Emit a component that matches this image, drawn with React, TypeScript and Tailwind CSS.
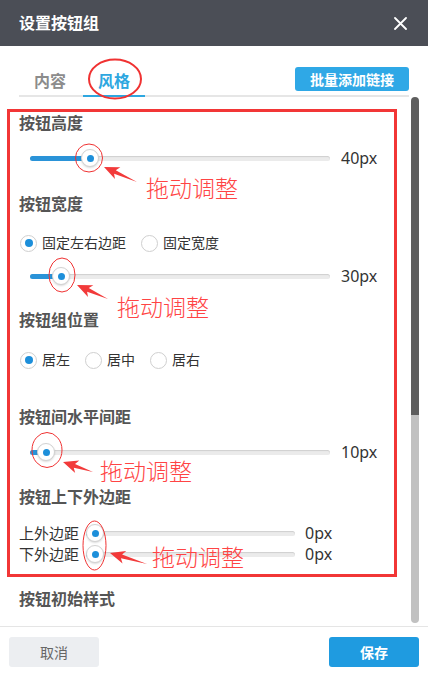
import React from 'react';

type SliderProps = {
  width: number;
  thumb: number;
  value: string;
  gap: number;
};

const Slider: React.FC<SliderProps> = ({ width, thumb, value, gap }) => {
  return (
    <div className="flex items-center h-[24px]">
      <div
        className="relative h-[5px] rounded-full bg-[#ebebeb] shadow-[inset_0_1px_1px_rgba(0,0,0,0.12)]"
        style={{ width }}
      >
        <div className="absolute left-0 top-0 h-full rounded-full bg-[#2a93d8]" style={{ width: thumb }} />
        <div
          className="absolute top-1/2 -translate-y-1/2 w-[18px] h-[18px] rounded-full bg-white border border-[#d2d2d2] shadow-[0_1px_2px_rgba(0,0,0,0.15)] flex items-center justify-center"
          style={{ left: thumb - 9 }}
        >
          <div className="w-[7px] h-[7px] rounded-full bg-[#1d8fda]" />
        </div>
      </div>
      <span className="text-[16px] leading-none text-[#333]" style={{ marginLeft: gap }}>
        {value}
      </span>
    </div>
  );
};

const Radio: React.FC<{ label: string; checked?: boolean; className?: string }> = ({ label, checked, className }) => (
  <div className={'flex items-center ' + (className || '')}>
    <div className="w-[17px] h-[17px] rounded-full border border-[#cfcfcf] bg-white flex items-center justify-center">
      {checked && <div className="w-[8px] h-[8px] rounded-full bg-[#1d8fda]" />}
    </div>
    <span className="ml-[5px] text-[14px] leading-none text-[#333]">{label}</span>
  </div>
);

const Heading: React.FC<{ children: React.ReactNode; className?: string }> = ({ children, className }) => (
  <div className={'h-[22px] flex items-center text-[16px] font-bold text-[#555] ' + (className || '')}>{children}</div>
);

const arrows = [
  { tip: [104, 167], tail: [137, 182] },
  { tip: [77, 285], tail: [108, 299] },
  { tip: [63, 462], tail: [93, 472] },
  { tip: [110, 553], tail: [147, 564] },
];

const Annotations: React.FC = () => (
  <div className="absolute inset-0 pointer-events-none">
    <svg width="428" height="676" className="absolute left-0 top-0">
      <ellipse cx="115" cy="79" rx="26" ry="19.5" fill="none" stroke="#f03232" strokeWidth="2" />
      <ellipse cx="89" cy="158" rx="13.5" ry="14" fill="none" stroke="#f03232" strokeWidth="1" />
      <ellipse cx="62" cy="275" rx="13" ry="17" fill="none" stroke="#f03232" strokeWidth="1" />
      <ellipse cx="47" cy="450" rx="15" ry="17.5" fill="none" stroke="#f03232" strokeWidth="1" />
      <ellipse cx="94.5" cy="545.5" rx="11.5" ry="24.5" fill="none" stroke="#f03232" strokeWidth="1" />
      {arrows.map((a, i) => {
        const dx = a.tail[0] - a.tip[0];
        const dy = a.tail[1] - a.tip[1];
        const len = Math.sqrt(dx * dx + dy * dy);
        const ang = (Math.atan2(dy, dx) * 180) / Math.PI;
        return (
          <polygon
            key={i}
            points={`0,0 15,-6.5 12,-2 ${len},0 12,2 15,6.5`}
            fill="#f23a3a"
            transform={`translate(${a.tip[0]} ${a.tip[1]}) rotate(${ang})`}
          />
        );
      })}
    </svg>
    <span className="absolute left-[146px] top-[177px] text-[23px] leading-[23px] font-light text-[#ff4444]">拖动调整</span>
    <span className="absolute left-[117px] top-[296px] text-[23px] leading-[23px] font-light text-[#ff4444]">拖动调整</span>
    <span className="absolute left-[100px] top-[460px] text-[23px] leading-[23px] font-light text-[#ff4444]">拖动调整</span>
    <span className="absolute left-[152px] top-[546px] text-[23px] leading-[23px] font-light text-[#ff4444]">拖动调整</span>
  </div>
);

export default function App() {
  return (
    <div className="relative w-[428px] h-[676px] flex flex-col bg-white overflow-hidden font-['Noto_Sans','Noto_Sans_CJK_SC',sans-serif]">
      <div className="h-[46px] shrink-0 bg-[#4b4e56] flex items-center justify-between pl-[19px] pr-[21px]">
        <span className="text-[16px] font-bold text-white">设置按钮组</span>
        <svg width="13" height="13" viewBox="0 0 13 13">
          <path d="M1 1L12 12M12 1L1 12" stroke="#fff" strokeWidth="1.8" strokeLinecap="round" />
        </svg>
      </div>

      <div className="h-[51px] shrink-0 px-[19px] flex">
        <div className="flex-1 flex items-end justify-between border-b-2 border-[#e6e6e6]">
          <div className="flex -mb-[2px]">
            <div className="w-[62px] h-[30px] flex items-center justify-center text-[16px] font-bold text-[#8c8c8c] border-b-2 border-transparent">
              内容
            </div>
            <div className="ml-[2px] w-[62px] h-[30px] flex items-center justify-center text-[16px] font-bold text-[#2ea7e0] border-b-2 border-[#2ea7e0]">
              风格
            </div>
          </div>
          <div className="mb-[4px] w-[114px] h-[24px] rounded-[3px] bg-[#2fa8e6] flex items-center justify-center text-[14px] font-bold text-white">
            批量添加链接
          </div>
        </div>
      </div>

      <div className="flex-1 flex min-h-0">
        <div className="w-[411px] pl-[7px] pt-[12px]">
          <div className="w-[390px] border-[3px] border-[#f23636] pl-[9px] pb-[10px]">
            <Heading>按钮高度</Heading>
            <div className="mt-[12px] ml-[11px]">
              <Slider width={300} thumb={60} value="40px" gap={11} />
            </div>
            <Heading className="mt-[23px]">按钮宽度</Heading>
            <div className="mt-[18px] h-[20px] flex items-center ml-[1px]">
              <Radio label="固定左右边距" checked />
              <Radio label="固定宽度" className="ml-[15px]" />
            </div>
            <div className="mt-[11px] ml-[11px]">
              <Slider width={300} thumb={31} value="30px" gap={11} />
            </div>
            <Heading className="mt-[21px]">按钮组位置</Heading>
            <div className="mt-[19px] h-[20px] flex items-center ml-[1px]">
              <Radio label="居左" checked />
              <Radio label="居中" className="ml-[15px]" />
              <Radio label="居右" className="ml-[15px]" />
            </div>
            <Heading className="mt-[36px]">按钮间水平间距</Heading>
            <div className="mt-[12px] ml-[11px]">
              <Slider width={300} thumb={16} value="10px" gap={11} />
            </div>
            <Heading className="mt-[22px]">按钮上下外边距</Heading>
            <div className="mt-[15px] h-[20px] flex items-center">
              <span className="w-[67px] text-[15px] leading-none text-[#333]">上外边距</span>
              <Slider width={209} thumb={9} value="0px" gap={10} />
            </div>
            <div className="mt-[1px] h-[20px] flex items-center">
              <span className="w-[67px] text-[15px] leading-none text-[#333]">下外边距</span>
              <Slider width={209} thumb={9} value="0px" gap={10} />
            </div>
          </div>
          <Heading className="mt-[11px] ml-[12px]">按钮初始样式</Heading>
        </div>
        <div className="w-[8px] h-[526px] flex flex-col">
          <div className="h-[318px] rounded-t-full bg-[#5e5e5e]" />
          <div className="flex-1 rounded-b-full bg-[#c1c1c1]" />
        </div>
      </div>

      <div className="h-[50px] shrink-0 border-t border-[#e5e5e5] flex justify-between px-[9px] pt-[10px]">
        <div className="w-[90px] h-[30px] rounded-[3px] bg-[#eceef1] flex items-center justify-center text-[14px] text-[#666]">
          取消
        </div>
        <div className="w-[90px] h-[30px] rounded-[3px] bg-[#1f9be0] flex items-center justify-center text-[14px] font-bold text-white">
          保存
        </div>
      </div>

      <Annotations />
    </div>
  );
}
